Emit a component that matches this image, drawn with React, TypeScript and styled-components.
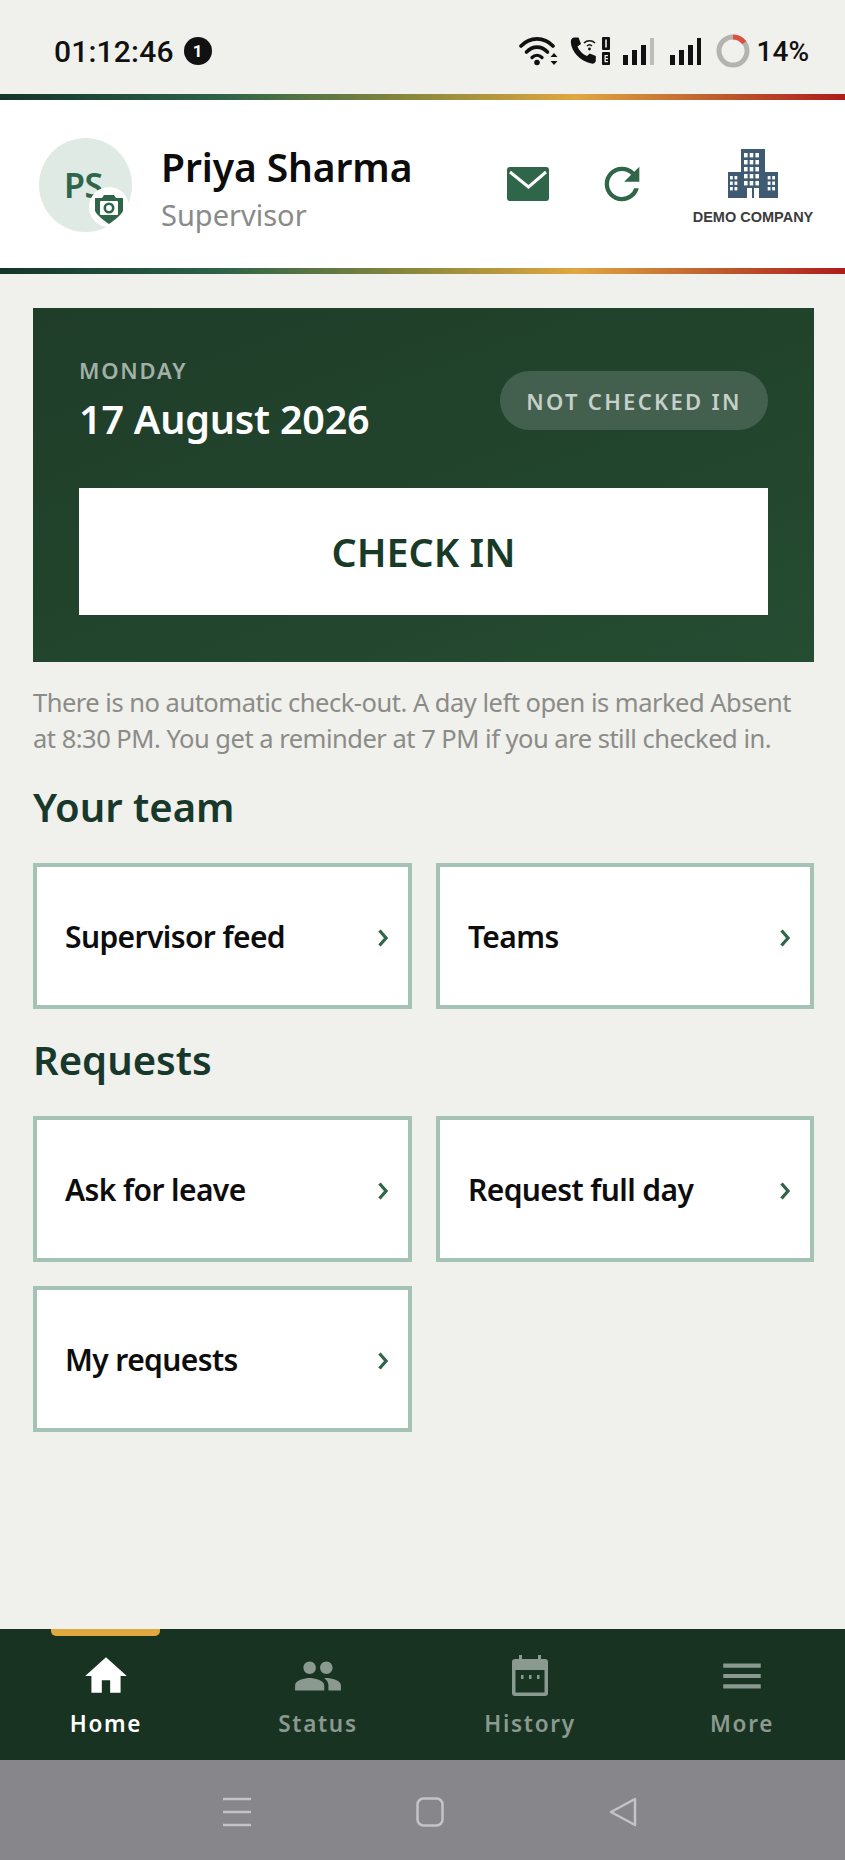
import React from "react";
import styled, { createGlobalStyle } from "styled-components";
import { MdHome, MdMenu, MdPeople, MdRefresh } from "react-icons/md";

const GlobalStyle = createGlobalStyle`
  html, body { margin: 0; padding: 0; background: #f0f0ec; }
  * { box-sizing: border-box; }
  body { font-family: "Noto Sans", Roboto, sans-serif; }
`;

const Page = styled.div`
  width: 845px;
  height: 1860px;
  display: flex;
  flex-direction: column;
  background: #f0f0ec;
  overflow: hidden;
`;

const StatusBar = styled.div`
  height: 94px;
  flex: none;
  padding: 8px 36px 0 54px;
  display: flex;
  align-items: center;
  justify-content: space-between;
  color: #111;
`;

const StatusLeft = styled.div`
  display: flex;
  align-items: center;
  gap: 10px;
  font-family: Roboto, sans-serif;
  font-size: 30px;
  font-weight: 500;
  letter-spacing: 0.2px;
`;

const Dot = styled.span`
  width: 28px;
  height: 28px;
  border-radius: 50%;
  background: #111;
  color: #fff;
  font-size: 17px;
  font-weight: 700;
  display: flex;
  align-items: center;
  justify-content: center;
  letter-spacing: 0;
`;

const StatusRight = styled.div`
  display: flex;
  align-items: center;
  font-family: Roboto, sans-serif;
  font-size: 28px;
  font-weight: 500;
`;

const StatusIcon = styled.span<{ $gap: number }>`
  display: flex;
  margin-right: ${(p) => p.$gap}px;
`;

const Stripe = styled.div`
  height: 6px;
  flex: none;
  background: linear-gradient(90deg, #14352a 0%, #2b6349 26%, #8f8a3c 50%, #e0a640 68%, #c0602e 84%, #ad1c1c 100%);
`;

const Header = styled.header`
  height: 168px;
  flex: none;
  background: #fff;
  padding: 0 31px 0 39px;
  display: flex;
  align-items: center;
`;

const Avatar = styled.div`
  position: relative;
  width: 93px;
  height: 94px;
  flex: none;
  margin: 2px 29px 0 0;
  border-radius: 50%;
  background: #dfeae4;
  color: #2f6549;
  font-size: 34px;
  font-weight: 600;
  display: flex;
  align-items: center;
  padding-left: 25px;
  letter-spacing: -0.5px;
`;

const CameraBadge = styled.span`
  position: absolute;
  right: 3px;
  bottom: 5px;
  display: flex;
`;

const Who = styled.div`
  flex: 1;
  padding-top: 9px;
  display: flex;
  flex-direction: column;
  gap: 7px;
`;

const Name = styled.div`
  font-size: 39px;
  line-height: 46px;
  font-weight: 600;
  color: #0c0c0c;
  letter-spacing: -0.1px;
`;

const Role = styled.div`
  font-size: 29px;
  line-height: 36px;
  color: #8a8a8a;
`;

const HeaderActions = styled.div`
  display: flex;
  align-items: center;
  gap: 46px;
  margin: 0 44px 0 0;
  color: #2f6549;
  svg { display: block; }
`;

const Company = styled.div`
  width: 122px;
  display: flex;
  flex-direction: column;
  align-items: center;
  gap: 11px;
  margin-top: 5px;
  font-family: "Liberation Sans", sans-serif;
  font-size: 14.5px;
  line-height: 16px;
  font-weight: 700;
  color: #3c3c3c;
  white-space: nowrap;
`;

const Main = styled.main`
  flex: 1;
  padding: 34px 31px 0 33px;
  display: flex;
  flex-direction: column;
`;

const CheckCard = styled.section`
  height: 354px;
  flex: none;
  padding: 47px 46px 47px;
  background: linear-gradient(160deg, #1f3d29 0%, #22452d 60%, #254d32 100%);
  display: flex;
  flex-direction: column;
  justify-content: space-between;
`;

const CardTop = styled.div`
  display: flex;
  align-items: center;
  justify-content: space-between;
`;

const Day = styled.div`
  font-size: 22px;
  line-height: 30px;
  font-weight: 600;
  letter-spacing: 1.800px;
  color: #a3b0a7;
`;

const DateText = styled.div`
  font-size: 39.5px;
  line-height: 48px;
  font-weight: 600;
  color: #fff;
  margin-top: 10px;
  letter-spacing: -0.2px;
`;

const Pill = styled.div`
  width: 268px;
  height: 59px;
  margin-top: 3px;
  border-radius: 30px;
  background: #43604e;
  color: #c6cfc9;
  font-size: 22px;
  font-weight: 600;
  letter-spacing: 2.3px;
  display: flex;
  align-items: center;
  justify-content: center;
  white-space: nowrap;
`;

const CheckButton = styled.button`
  height: 127px;
  border: none;
  padding: 0;
  background: #fff;
  color: #1a3a28;
  font-family: inherit;
  font-size: 39.5px;
  font-weight: 600;
`;

const Note = styled.p`
  margin: 22px 0 0;
  font-size: 25.5px;
  line-height: 36px;
  color: #8b8b88;
  letter-spacing: -0.5px;
  white-space: nowrap;
`;

const SectionTitle = styled.h2<{ $top: number }>`
  margin: ${(p) => p.$top}px 0 0;
  font-size: 40px;
  line-height: 54px;
  font-weight: 600;
  color: #17382a;
`;

const TileGrid = styled.div`
  display: grid;
  grid-template-columns: 379px 378px;
  gap: 24px 24px;
  margin-top: 29px;
`;

const Tile = styled.div`
  height: 146px;
  border: 4px solid #a4c3b4;
  background: #fff;
  padding: 0 20px 0 28px;
  display: flex;
  align-items: center;
  justify-content: space-between;
  font-size: 30px;
  font-weight: 600;
  color: #0d0d0d;
  letter-spacing: -0.6px;
  svg { margin-top: 3px; }
`;

const BottomNav = styled.nav`
  position: relative;
  height: 131px;
  flex: none;
  background: #193322;
  display: grid;
  grid-template-columns: repeat(4, 212px);
`;

const ActiveMark = styled.span`
  position: absolute;
  left: 51px;
  top: 0;
  width: 109px;
  height: 7px;
  border-radius: 0 0 5px 5px;
  background: #e0a83f;
`;

const NavItem = styled.div<{ $active?: boolean }>`
  display: flex;
  flex-direction: column;
  align-items: center;
  padding-top: 23px;
  color: ${(p) => (p.$active ? "#ffffff" : "#8a9a90")};
  font-size: 22.5px;
  line-height: 30px;
  font-weight: 600;
  letter-spacing: 1.7px;
`;

const NavIcon = styled.span`
  height: 48px;
  margin-bottom: 9px;
  display: flex;
  align-items: center;
`;

const SystemBar = styled.div`
  height: 100px;
  flex: none;
  background: #87878b;
  display: flex;
  align-items: center;
  justify-content: center;
  gap: 165px;
  padding: 4px 0 0 14px;
  color: #c4c4c7;
`;

const Wifi = () => (
  <svg width="40" height="30" viewBox="0 0 40 30" fill="none" stroke="currentColor" strokeLinecap="round">
    <path d="M2 10C11 .5 25 .5 34 10" strokeWidth="3.600" />
    <path d="M7.500 16C14 9.500 22 9.500 28.500 16" strokeWidth="3.600" />
    <path d="M13 21.500C16 18.500 20 18.500 23 21.500" strokeWidth="3.200" />
    <circle cx="18" cy="26.500" r="2.800" fill="currentColor" stroke="none" />
    <path d="M35 17l3.500 4h-7zM35 29l3.500-4h-7z" fill="currentColor" stroke="none" />
  </svg>
);

const Call = () => (
  <svg width="40" height="30" viewBox="0 0 40 30" fill="currentColor">
    <path d="M4 1.500l4.500 0 2.500 6.500-3.500 2.500c1.500 4 5.500 8 9.500 9.500l2.800-2.500 6 2.500 0 5c-.5 2-2.500 3-4.500 2.500C10 25 1.500 16 .8 6 .8 3.500 2 2 4 1.500z" />
    <path d="M14 7c3-3 8-3 11 0M17 10c1.500-1.500 3.500-1.500 5 0" fill="none" stroke="currentColor" strokeWidth="1.500" />
    <circle cx="19.500" cy="13" r="1.400" />
    <rect x="32" y="1" width="8" height="13" rx="1" />
    <rect x="32" y="16" width="8" height="13" rx="1" />
    <rect x="35.200" y="3.500" width="1.600" height="8" fill="#f0f0ec" />
    <path d="M34.500 19h3.500v1.200h-2.200v1.800h2.200v1.200h-2.200v1.800h2.200V26.200h-3.500z" fill="#f0f0ec" />
  </svg>
);

const Signal = ({ faded }: { faded?: boolean }) => (
  <svg width="31" height="27" viewBox="0 0 31 27" fill="currentColor">
    <rect x="0" y="17" width="5" height="10" />
    <rect x="9" y="12" width="5" height="15" />
    <rect x="18" y="7" width="5" height="20" />
    <rect x="27" y="0" width="4" height="27" fill={faded ? "#bdbdbb" : "currentColor"} />
  </svg>
);

const BatteryRing = () => (
  <svg width="34" height="34" viewBox="0 0 34 34" fill="none" strokeWidth="5">
    <circle cx="17" cy="17" r="14" stroke="#b3b3b1" />
    <path d="M17 3A14 14 0 0 1 28.300 8.700" stroke="#dd5040" />
  </svg>
);

const Mail = () => (
  <svg width="43" height="35" viewBox="0 0 43 35">
    <rect width="42" height="34" rx="3" fill="#2f6549" />
    <path d="M3 5l18.500 15L39 5" fill="none" stroke="#fff" strokeWidth="3" />
  </svg>
);

const Building = () => {
  const cells: React.ReactNode[] = [];
  for (let r = 0; r < 5; r++) {
    for (let c = 0; c < 3; c++) {
      cells.push(<rect key={`m${r}${c}`} x={16 + c * 5.700} y={4 + r * 7} width="3.600" height="4.400" fill="#fff" />);
    }
  }
  for (let r = 0; r < 3; r++) {
    for (let c = 0; c < 2; c++) {
      cells.push(<rect key={`l${r}${c}`} x={2 + c * 4.500} y={27 + r * 5.500} width="2.800" height="3.400" fill="#fff" />);
      cells.push(<rect key={`r${r}${c}`} x={39.700 + c * 4.500} y={27 + r * 5.500} width="2.800" height="3.400" fill="#fff" />);
    }
  }
  return (
    <svg width="50" height="49" viewBox="0 0 50 49">
      <path d="M13 0h24v23h13v26H31V39h-5v10h-2V39h-5v10H0V23h13z" fill="#3f5b73" />
      {cells}
    </svg>
  );
};

const CameraPin = () => (
  <svg width="40" height="40" viewBox="0 0 40 40">
    <circle cx="20" cy="20" r="20" fill="#fff" />
    <path d="M6 11h7l2-3h10l2 3h7v13c-2 4-8 9-14 13C14 33 8 28 6 24z" fill="#2f6549" />
    <rect x="11" y="14" width="18" height="14" rx="1" fill="#fff" />
    <circle cx="20" cy="21" r="4.200" fill="#fff" stroke="#2f6549" strokeWidth="2.600" />
  </svg>
);

const Chevron = () => (
  <svg width="10" height="18" viewBox="0 0 10 18" fill="none" stroke="#2f6549" strokeWidth="3.200">
    <path d="M1.500 1.500L8 9l-6.500 7.500" />
  </svg>
);

const Calendar = () => (
  <svg width="38" height="42" viewBox="0 0 38 42" fill="currentColor">
    <rect x="8" y="0" width="3" height="7" />
    <rect x="27" y="0" width="3" height="7" />
    <path fillRule="evenodd" d="M4 4h30a3 3 0 0 1 3 3v31a3 3 0 0 1-3 3H4a3 3 0 0 1-3-3V7a3 3 0 0 1 3-3zM4.500 15v22.500h29V15z" />
    <rect x="10" y="20" width="2.500" height="4" />
    <rect x="18" y="20" width="2.500" height="4" />
    <rect x="26" y="20" width="2.500" height="4" />
  </svg>
);

const SysMenu = () => (
  <svg width="28" height="30" viewBox="0 0 28 30" fill="none" stroke="currentColor" strokeWidth="2.500">
    <path d="M0 2h28M0 15h28M0 28h28" />
  </svg>
);

const SysHome = () => (
  <svg width="28" height="30" viewBox="0 0 28 30" fill="none" stroke="currentColor" strokeWidth="2.500">
    <rect x="1.500" y="1.500" width="25" height="27" rx="6" />
  </svg>
);

const SysBack = () => (
  <svg width="28" height="30" viewBox="0 0 28 30" fill="none" stroke="currentColor" strokeWidth="2.500" strokeLinejoin="round">
    <path d="M26 2v26L2 15z" />
  </svg>
);

const tabs = [
  { label: "Home", icon: <MdHome size={50} />, active: true },
  { label: "Status", icon: <MdPeople size={50} /> },
  { label: "History", icon: <Calendar /> },
  { label: "More", icon: <MdMenu size={50} /> },
];

const LinkTile = ({ label }: { label: string }) => (
  <Tile>
    {label}
    <Chevron />
  </Tile>
);

export default function App() {
  return (
    <Page>
      <GlobalStyle />
      <StatusBar>
        <StatusLeft>
          01:12:46
          <Dot>1</Dot>
        </StatusLeft>
        <StatusRight>
          <StatusIcon $gap={11}>
            <Wifi />
          </StatusIcon>
          <StatusIcon $gap={13}>
            <Call />
          </StatusIcon>
          <StatusIcon $gap={16}>
            <Signal faded />
          </StatusIcon>
          <StatusIcon $gap={15}>
            <Signal />
          </StatusIcon>
          <StatusIcon $gap={7}>
            <BatteryRing />
          </StatusIcon>
          14%
        </StatusRight>
      </StatusBar>
      <Stripe />
      <Header>
        <Avatar>
          PS
          <CameraBadge>
            <CameraPin />
          </CameraBadge>
        </Avatar>
        <Who>
          <Name>Priya Sharma</Name>
          <Role>Supervisor</Role>
        </Who>
        <HeaderActions>
          <Mail />
          <MdRefresh size={52} />
        </HeaderActions>
        <Company>
          <Building />
          DEMO COMPANY
        </Company>
      </Header>
      <Stripe />
      <Main>
        <CheckCard>
          <CardTop>
            <div>
              <Day>MONDAY</Day>
              <DateText>17 August 2026</DateText>
            </div>
            <Pill>NOT CHECKED IN</Pill>
          </CardTop>
          <CheckButton>CHECK IN</CheckButton>
        </CheckCard>
        <Note>
          There is no automatic check-out. A day left open is marked Absent
          <br />
          at 8:30 PM. You get a reminder at 7 PM if you are still checked in.
        </Note>
        <SectionTitle $top={24}>Your team</SectionTitle>
        <TileGrid>
          <LinkTile label="Supervisor feed" />
          <LinkTile label="Teams" />
        </TileGrid>
        <SectionTitle $top={24}>Requests</SectionTitle>
        <TileGrid>
          <LinkTile label="Ask for leave" />
          <LinkTile label="Request full day" />
          <LinkTile label="My requests" />
        </TileGrid>
      </Main>
      <BottomNav>
        <ActiveMark />
        {tabs.map((t) => (
          <NavItem key={t.label} $active={t.active}>
            <NavIcon>{t.icon}</NavIcon>
            {t.label}
          </NavItem>
        ))}
      </BottomNav>
      <SystemBar>
        <SysMenu />
        <SysHome />
        <SysBack />
      </SystemBar>
    </Page>
  );
}
